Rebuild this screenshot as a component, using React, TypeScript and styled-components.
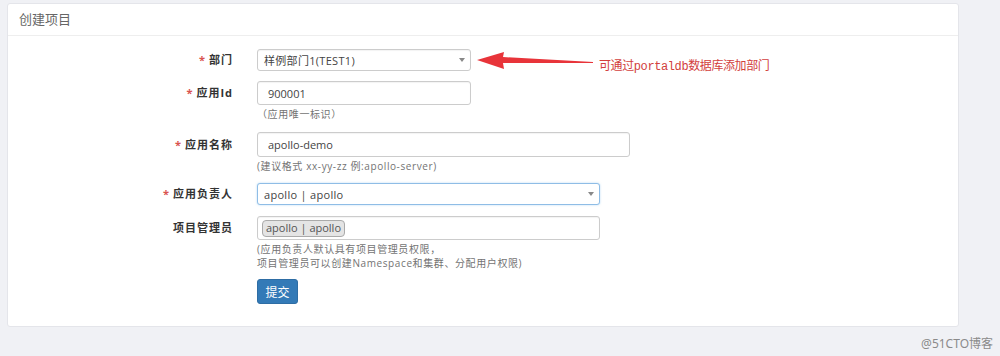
import * as React from 'react';
import styled, { createGlobalStyle } from 'styled-components';

const GlobalStyle = createGlobalStyle`
  html, body {
    margin: 0;
    padding: 0;
    background: #f0f1f5;
    font-family: "Open Sans", "Noto Sans CJK SC", sans-serif;
  }
`;

// --- Styled Components ---

const Page = styled.div`
  width: 1000px;
  height: 356px;
  padding: 3px 41px 0 7px;
  box-sizing: border-box;
  position: relative;
`;

const Panel = styled.section`
  background: #fff;
  border: 1px solid #e4e5ea;
  border-radius: 3px;
  height: 324px;
  box-sizing: border-box;
`;

const PanelHeading = styled.div`
  height: 32px;
  box-sizing: border-box;
  line-height: 30px;
  padding: 0 11px;
  border-bottom: 1px solid #eeeeee;
  font-size: 13px;
  color: #666;
`;

const Form = styled.form`
  padding-top: 13px;
`;

const FormGroup = styled.div<{ $mb: number }>`
  display: flex;
  align-items: flex-start;
  margin-bottom: ${p => p.$mb}px;
`;

const Label = styled.label<{ $h: number }>`
  width: 225px;
  flex: none;
  text-align: right;
  font-size: 11px;
  font-weight: 700;
  color: #333;
  letter-spacing: 1px;
  line-height: ${p => p.$h}px;
`;

const Required = styled.span`
  color: #d9534f;
  margin-right: 3px;
`;

const Control = styled.div`
  margin-left: 24px;
  display: flex;
  flex-direction: column;
`;

const Input = styled.div<{ $w: number; $h: number; $focus?: boolean }>`
  width: ${p => p.$w}px;
  height: ${p => p.$h}px;
  box-sizing: border-box;
  border: 1px solid ${p => (p.$focus ? '#8fbde6' : '#cccccc')};
  box-shadow: ${p => (p.$focus ? '0 0 2px rgba(102,175,233,0.5)' : 'inset 0 1px 1px rgba(0,0,0,0.05)')};
  border-radius: 3px;
  display: flex;
  align-items: center;
  padding: 0 5px 0 6px;
  font-size: 11px;
  color: #444;
  background: #fff;
`;

const TextValue = styled.span`
  padding-left: 4px;
`;

const SelectValue = styled.span`
  flex: 1;
  letter-spacing: 0.3px;
`;

const Caret = styled.span`
  width: 0;
  height: 0;
  border-left: 3px solid transparent;
  border-right: 3px solid transparent;
  border-top: 4px solid #888;
`;

const Help = styled.div`
  margin-top: 2px;
  font-size: 10px;
  line-height: 14px;
  color: #737373;
  letter-spacing: 0.6px;
`;

const Tag = styled.span`
  border: 1px solid #aaa;
  background: #e4e4e4;
  border-radius: 4px;
  padding: 0 3px;
  height: 15px;
  line-height: 14px;
  font-size: 11px;
  color: #555;
  margin-left: -2px;
`;

const SubmitButton = styled.button`
  width: 41px;
  height: 25px;
  padding: 0;
  border: 1px solid #2e6da4;
  border-radius: 3px;
  background: #337ab7;
  color: #fff;
  font-family: "Noto Sans CJK SC", sans-serif;
  font-size: 12px;
`;

const Note = styled.div`
  display: flex;
  align-items: center;
  margin-left: 6px;
  height: 22px;
`;

const NoteText = styled.span`
  margin-left: 4px;
  margin-top: 9px;
  font-family: "Liberation Mono", "Noto Sans CJK SC", monospace;
  font-size: 12px;
  letter-spacing: -0.4px;
  color: #d2403d;
`;

const Watermark = styled.div`
  position: absolute;
  right: 7px;
  bottom: 4px;
  font-size: 12px;
  color: #8a8a8a;
  font-family: "Noto Sans", "Noto Sans CJK SC", sans-serif;
`;

function Arrow() {
  return (
    <svg width="118" height="22" viewBox="0 0 118 22">
      <path d="M0 11 L27 3 L26 8 L116 13 L116 14 L26 14 L27 20 Z" fill="#e8343a" />
    </svg>
  );
}

export default function App() {
  return (
    <Page>
      <GlobalStyle />
      <Panel>
        <PanelHeading>创建项目</PanelHeading>
        <Form onSubmit={e => e.preventDefault()}>
          <FormGroup $mb={10}>
            <Label $h={22}><Required>*</Required>部门</Label>
            <Control>
              <Input $w={214} $h={22}>
                <SelectValue>样例部门1(TEST1)</SelectValue>
                <Caret />
              </Input>
            </Control>
            <Note>
              <Arrow />
              <NoteText>可通过portaldb数据库添加部门</NoteText>
            </Note>
          </FormGroup>

          <FormGroup $mb={11}>
            <Label $h={24}><Required>*</Required>应用Id</Label>
            <Control>
              <Input $w={214} $h={24}><TextValue>900001</TextValue></Input>
              <Help>（应用唯一标识）</Help>
            </Control>
          </FormGroup>

          <FormGroup $mb={10}>
            <Label $h={25}><Required>*</Required>应用名称</Label>
            <Control>
              <Input $w={373} $h={25}><TextValue>apollo-demo</TextValue></Input>
              <Help>(建议格式 xx-yy-zz 例:apollo-server)</Help>
            </Control>
          </FormGroup>

          <FormGroup $mb={11}>
            <Label $h={22}><Required>*</Required>应用负责人</Label>
            <Control>
              <Input $w={343} $h={22} $focus>
                <SelectValue>apollo | apollo</SelectValue>
                <Caret />
              </Input>
            </Control>
          </FormGroup>

          <FormGroup $mb={9}>
            <Label $h={24}>项目管理员</Label>
            <Control>
              <Input $w={343} $h={24}><Tag>apollo | apollo</Tag></Input>
              <Help>
                (应用负责人默认具有项目管理员权限，<br />
                项目管理员可以创建Namespace和集群、分配用户权限)
              </Help>
            </Control>
          </FormGroup>

          <FormGroup $mb={0}>
            <Label $h={25} />
            <Control>
              <SubmitButton type="submit">提交</SubmitButton>
            </Control>
          </FormGroup>
        </Form>
      </Panel>
      <Watermark>@51CTO博客</Watermark>
    </Page>
  );
}
